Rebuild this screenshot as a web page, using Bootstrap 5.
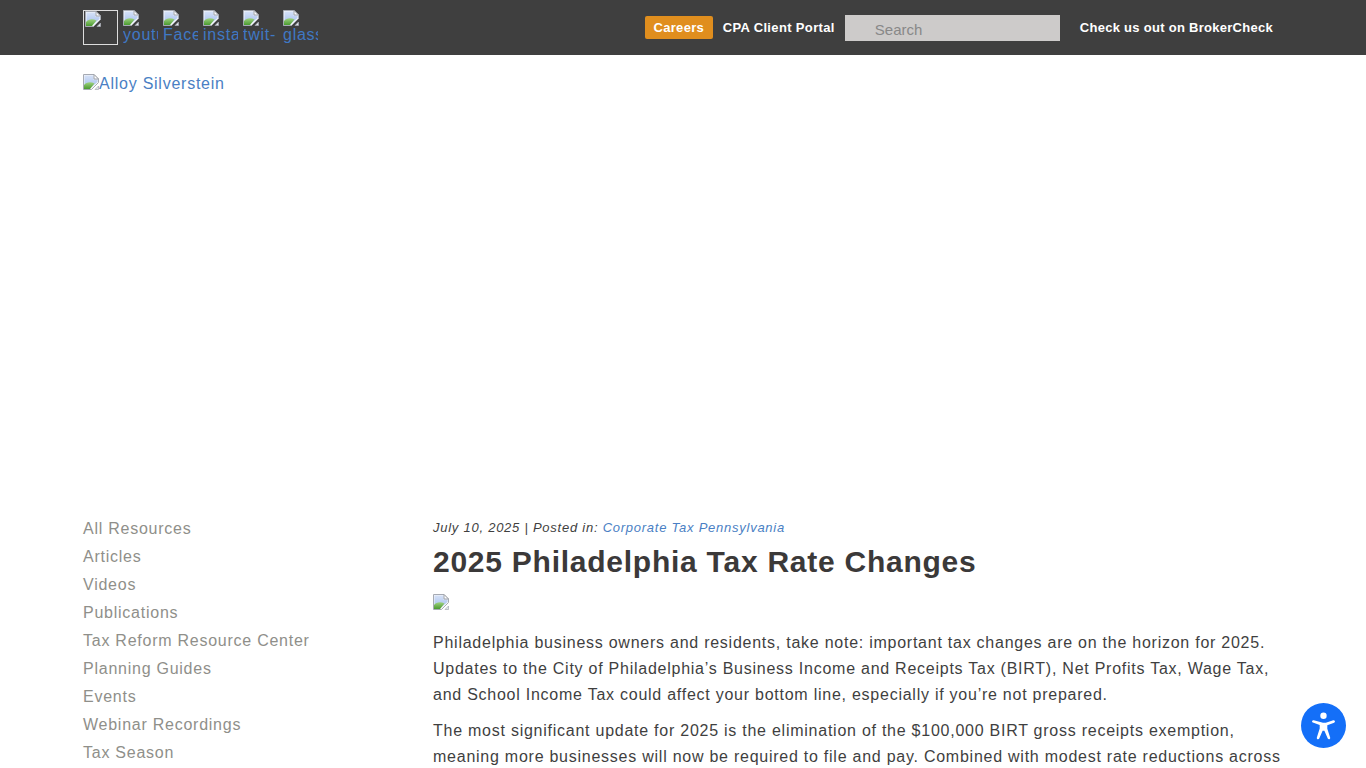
<!DOCTYPE html>
<html lang="en"><head><meta charset="utf-8"><title>2025 Philadelphia Tax Rate Changes</title>
<link href="https://cdn.jsdelivr.net/npm/bootstrap@5.3.0/dist/css/bootstrap.min.css" rel="stylesheet">
<style>
html,body{height:768px;overflow:hidden}
body{font-family:"Liberation Sans",Arial,sans-serif;font-size:16px;letter-spacing:.75px;color:#3f3f3f;background:#fff}
a{color:#4a7fc4;text-decoration:none}
.topbar{background:#3f3f3f;height:55px;padding:0 83px}
.broken-ico{display:block;width:16px;height:16px;flex:none}
.soc-box{width:35px;height:35px;overflow:hidden;line-height:18px;font-size:16px;white-space:nowrap}
.soc-box.framed{border:1px solid #ddd;padding:0 0 0 1px}
.soc-box a{color:#3f78c4}
.soc-wrap{gap:5px;padding-top:10px}
.btn-careers{background:#e08e1e;color:#fff;font-size:13px;font-weight:700;border-radius:2px;height:23px;line-height:23px;padding:0 8.5px;letter-spacing:.32px;margin-right:10px}
.top-link{color:#fff;font-size:13px;font-weight:700;letter-spacing:.35px}
.top-link.broker{letter-spacing:.28px;margin-right:10px}
.search-fake{background:#cdcbca;width:215px;height:26px;padding:3px 30px 0;font-size:15px;color:#888;border:0;outline:0;border-radius:0;font-family:inherit;letter-spacing:0;margin:0 20px 0 10px}
.search-fake::placeholder{color:#888;opacity:1}
.logo-line{padding:19px 83px 0;height:460px;line-height:20px}
.logo-line a{display:inline-flex;align-items:flex-start}
.content-row{padding:0 83px;display:flex}
.side-col{width:350px;flex:none}
.side-col a{display:block;color:#8f8f8a;height:28px;line-height:28px}
.main-col{flex:1 1 auto;min-width:0}
.post-meta{font-size:13px;font-style:italic;line-height:20px;margin:3px 0 0}
.post-title{font-size:30px;font-weight:700;line-height:36px;margin:6px 0 14px;letter-spacing:.75px;color:#3b3939}
.post-img{margin-bottom:20px}
.post-text{line-height:26px;margin:0 0 10px}
.a11y-btn{position:fixed;left:1301px;top:703px;width:45px;height:45px;border-radius:50%;background:#146ff8;display:flex;align-items:center;justify-content:center}
</style></head><body>
<svg width="0" height="0" class="position-absolute"><defs>
<linearGradient id="sky" x1="0" y1="0" x2="0" y2="1"><stop offset="0" stop-color="#d5e1f7"/><stop offset="1" stop-color="#a9c2ee"/></linearGradient>
<linearGradient id="hill" x1="0" y1="0" x2="0" y2="1"><stop offset="0" stop-color="#9fd27f"/><stop offset="1" stop-color="#4a9a30"/></linearGradient>
<symbol id="brk" viewBox="0 0 16 16">
<path d="M.5.5H11L15.500 5V8.500L8.500 15.500H.5Z" fill="#f3f5f9" stroke="#a6aab3"/>
<path d="M1.500 1.500H10.500V5.500H14.500V8L9 12.500H1.500Z" fill="url(#sky)"/>
<path d="M1 15V11C3.500 8 7.500 7.500 11.500 9.500L7 15Z" fill="url(#hill)"/>
<path d="M11 .5V5H15.500Z" fill="#fff" stroke="#9ea2a9"/>
<path d="M12 15.500L15.500 12V15.500Z" fill="#e4e8ef" stroke="#a6aab3" stroke-width=".7"/>
</symbol>
</defs></svg>
<header class="topbar d-flex justify-content-between">
<div class="d-flex soc-wrap">
<div class="soc-box framed"><svg class="broken-ico"><use href="#brk"/></svg></div>
<div class="soc-box"><a href="#"><svg class="broken-ico"><use href="#brk"/></svg>youtube</a></div>
<div class="soc-box"><a href="#"><svg class="broken-ico"><use href="#brk"/></svg>Facebook</a></div>
<div class="soc-box"><a href="#"><svg class="broken-ico"><use href="#brk"/></svg>instagram</a></div>
<div class="soc-box"><a href="#"><svg class="broken-ico"><use href="#brk"/></svg>twit-</a></div>
<div class="soc-box"><a href="#"><svg class="broken-ico"><use href="#brk"/></svg>glassdoor</a></div>
</div>
<div class="d-flex align-items-center">
<a class="btn-careers" href="#">Careers</a>
<a class="top-link" href="#">CPA Client Portal</a>
<input class="search-fake" type="text" placeholder="Search" aria-label="Search">
<a class="top-link broker" href="#">Check us out on BrokerCheck</a>
</div>
</header>
<div class="logo-line"><a href="#"><svg class="broken-ico"><use href="#brk"/></svg>Alloy Silverstein</a></div>
<div class="content-row">
<nav class="side-col">
<a href="#">All Resources</a><a href="#">Articles</a><a href="#">Videos</a><a href="#">Publications</a><a href="#">Tax Reform Resource Center</a><a href="#">Planning Guides</a><a href="#">Events</a><a href="#">Webinar Recordings</a><a href="#">Tax Season</a>
</nav>
<main class="main-col">
<p class="post-meta">July 10, 2025 | Posted in: <a href="#">Corporate Tax Pennsylvania</a></p>
<h1 class="post-title">2025 Philadelphia Tax Rate Changes</h1>
<svg class="broken-ico post-img"><use href="#brk"/></svg>
<p class="post-text">Philadelphia business owners and residents, take note: important tax changes are on the horizon for 2025. Updates to the City of Philadelphia’s Business Income and Receipts Tax (BIRT), Net Profits Tax, Wage Tax, and School Income Tax could affect your bottom line, especially if you’re not prepared.</p>
<p class="post-text">The most significant update for 2025 is the elimination of the $100,000 BIRT gross receipts exemption, meaning more businesses will now be required to file and pay. Combined with modest rate reductions across</p>
</main>
</div>
<a class="a11y-btn" href="#" aria-label="Accessibility"><svg width="31" height="31" viewBox="0 0 35 35" fill="#fff"><circle cx="17.500" cy="6.500" r="3.600"/><path d="M6.500 11.600c-.7-.3-1.500 0-1.800.8-.3.7 0 1.500.8 1.800l7.700 2.800v4L10 31c-.3.8.1 1.600.8 1.900.8.3 1.600-.1 1.900-.8l3.800-8.600h2l3.800 8.600c.3.7 1.100 1.100 1.900.8.7-.3 1.100-1.100.8-1.900l-3.200-9.900v-4l7.700-2.800c.8-.3 1.100-1.100.8-1.800-.3-.8-1.100-1.100-1.800-.8l-8.400 2.800h-3.200z"/></svg></a>
<script src="https://cdn.jsdelivr.net/npm/bootstrap@5.3.0/dist/js/bootstrap.bundle.min.js"></script>
</body></html>
